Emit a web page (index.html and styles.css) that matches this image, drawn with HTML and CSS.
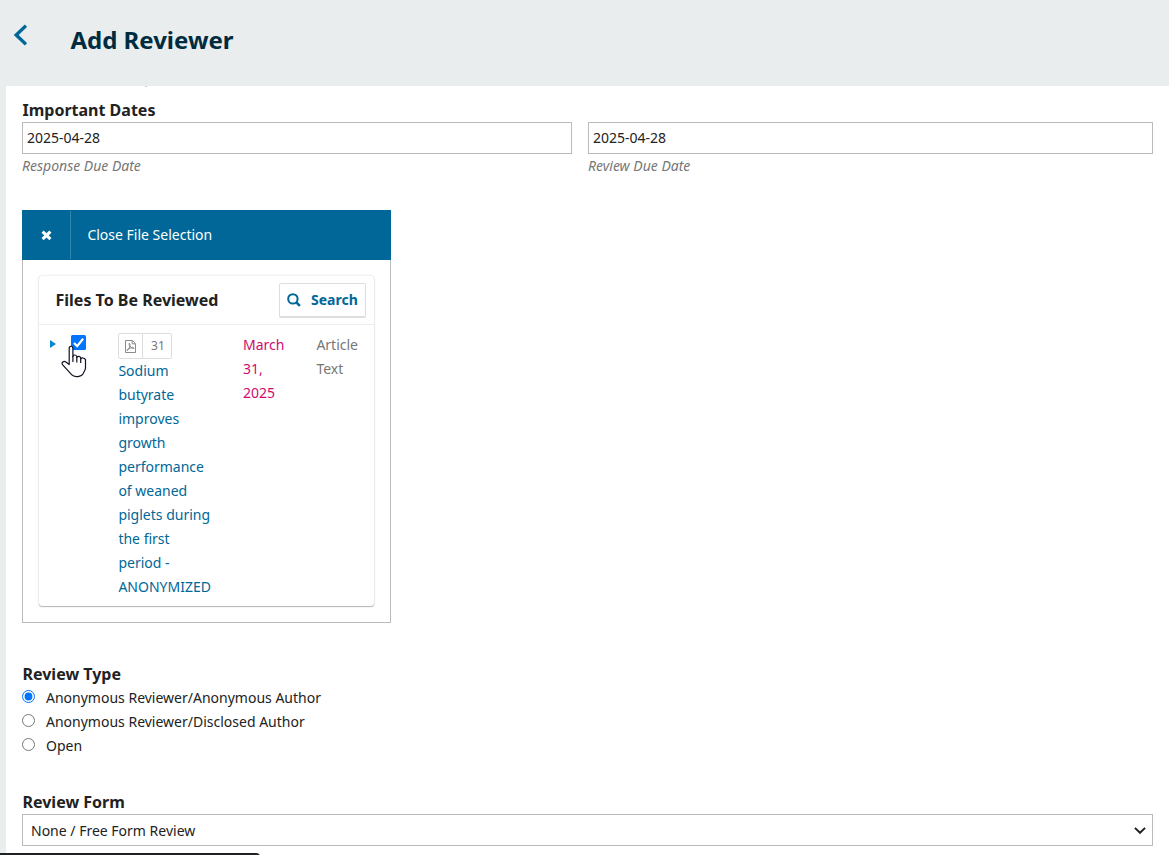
FILE: index.html
```html
<!DOCTYPE html>
<html lang="en">
<head>
<meta charset="utf-8">
<title>Add Reviewer</title>
<link rel="stylesheet" href="styles.css">
</head>
<body>
<header class="header">
  <svg class="back" width="14" height="22" viewBox="0 0 14 22"><path d="M13 1.7 3.2 11l9.8 9.3" fill="none" stroke="#006798" stroke-width="3.4"/></svg>
  <h1 class="title">Add Reviewer</h1>
</header>
<main class="panel">
  <span class="fragment"></span>
  <section>
    <h2 class="label">Important Dates</h2>
    <div class="dates">
      <div><div class="field">2025-04-28</div><div class="hint">Response Due Date</div></div>
      <div><div class="field">2025-04-28</div><div class="hint">Review Due Date</div></div>
    </div>
  </section>
  <section class="files">
    <div class="files-head">
      <span class="close"><svg width="11" height="11" viewBox="0 0 11 11"><path d="M1.6 1.7l7.8 7.4M9.4 1.7 1.6 9.1" stroke="#fff" stroke-width="3.1"/></svg></span>
      <span class="close-text">Close File Selection</span>
    </div>
    <div class="files-body">
      <div class="grid">
        <div class="grid-head">
          <h3 class="label">Files To Be Reviewed</h3>
          <div class="search"><svg width="14" height="14" viewBox="0 0 14 14"><circle cx="5.9" cy="5.9" r="4.7" fill="none" stroke="#006798" stroke-width="2"/><path d="M9.1 9.1l3.8 3.8" stroke="#006798" stroke-width="2.5"/></svg><span>Search</span></div>
        </div>
        <div class="row">
          <svg class="expand" width="6" height="8" viewBox="0 0 6 8"><path d="M0 0l6 4-6 4z" fill="#008acb"/></svg>
          <svg class="check" width="15" height="15" viewBox="0 0 15 15"><rect width="15" height="15" rx="1.5" fill="#0075ff"/><path d="M3 8l3.2 3.1L12.1 3.7" fill="none" stroke="#fff" stroke-width="2.2"/></svg>
          <div class="name">
            <span class="badge"><span class="badge-icon"><svg width="11" height="13" viewBox="0 0 11 13"><path d="M.5.5H7.4L10.5 3.6V12.5H.5zM7.2.7V3.8H10.3M4.5 3.5c1 .3.4 3.2-.4 4.8S2.2 11 1.9 10.3 4.5 8.2 6.3 7.8s3 0 2.7.6S6.1 8 4.7 5.6s-.5-2.2-.2-2.1" fill="none" stroke="#777" stroke-width=".85"/></svg></span><span class="badge-num">31</span></span>
            Sodium<br>butyrate<br>improves<br>growth<br>performance<br>of weaned<br>piglets during<br>the first<br>period -<br>ANONYMIZED
          </div>
          <div class="date">March<br>31,<br>2025</div>
          <div class="type">Article<br>Text</div>
        </div>
      </div>
    </div>
  </section>
  <section class="review-type">
    <h2 class="label">Review Type</h2>
    <label class="option"><input type="radio" name="type" checked>Anonymous Reviewer/Anonymous Author</label>
    <label class="option"><input type="radio" name="type">Anonymous Reviewer/Disclosed Author</label>
    <label class="option"><input type="radio" name="type">Open</label>
  </section>
  <section class="review-form">
    <h2 class="label">Review Form</h2>
    <div class="field select"><span>None / Free Form Review</span><svg width="12" height="7" viewBox="0 0 12 7"><path d="M.9.9 6 5.8 11.1.9" fill="none" stroke="#222" stroke-width="2"/></svg></div>
  </section>
</main>
<svg class="cursor" width="26" height="33" viewBox="0 0 26 33"><path d="M8.2 19.5V3.2c0-2.6 3.7-2.6 3.7 0v8.2c.3-1.9 3.7-1.9 3.9.4v.7c.5-1.7 3.7-1.4 3.9.6v.8c.7-1.5 3.8-1.2 4.8.7v8.3c0 2.1-1.5 3.8-2.3 5.7-1.5 3.3-9 4.2-11.6 1.1L1.5 19.6c-1.3-2.1 1.2-4 3.4-2.6z" fill="#fff" stroke="#111122" stroke-width="1.2" stroke-linejoin="round"/><path d="M11.9 11v6M15.8 12v5.4M19.7 13.5v4.4" stroke="#111122" stroke-width="1.2"/></svg>
<div class="status"></div>
</body>
</html>
```
FILE: styles.css
```css
* { box-sizing: border-box; }
body {
  margin: 0;
  height: 855px;
  overflow: hidden;
  background: #e9edee;
  color: #222;
  font: 14px/24px "Noto Sans", "Open Sans", sans-serif;
}
h1, h2, h3 { margin: 0; }
svg { display: block; flex: none; }
.header { display: flex; height: 86px; padding: 24px 0 0 13px; }
.title { margin-left: 43.4px; font-size: 24px; line-height: 32px; color: #002c40; }
.panel { margin-left: 6px; height: 769px; padding: 12px 16px 0; background: #fff; position: relative; }
.fragment { position: absolute; left: 139px; top: 0; width: 2px; height: 1px; background: #ccc; }
.label { padding-left: .5px; font-size: 16px; line-height: 24px; font-weight: 700; }
.dates { display: grid; grid-template-columns: 550px 565px; gap: 16px; }
.field { height: 32px; border: 1px solid #bbb; padding: 0 4px; line-height: 30px; background: #fff; }
.hint { font-style: italic; color: #777; }
.files { width: 369px; margin-top: 32px; }
.files-head { display: flex; height: 50px; background: #006798; color: #fff; line-height: 50px; }
.close { display: flex; align-items: center; justify-content: center; width: 49px; margin: 1px 0; padding-left: 1px; border-right: 1px solid #3285ad; }
.close-text { padding-left: 16.4px; }
.files-body { height: 363px; border: 1px solid #bbb; border-top: 0; padding: 16px 16px 15px; }
.grid { height: 330px; border-radius: 3px; box-shadow: 0 0 2px rgba(0,0,0,.22), 0 1px 1px rgba(0,0,0,.25); }
.grid-head { display: flex; align-items: center; justify-content: space-between; height: 49px; padding: 0 8px 0 16px; border-bottom: 1px solid #eee; }
.search { display: flex; align-items: center; gap: 10px; width: 87px; height: 35px; padding-left: 7px; border: 1px solid #ddd; border-bottom-width: 2px; border-radius: 2px; color: #006798; font-weight: 700; }
.row { display: flex; padding-top: 8px; }
.expand { margin: 7px 0 0 11px; }
.check { margin: 2px 0 0 15px; }
.name { width: 125px; margin-left: 32px; padding-left: .4px; color: #006798; }
.badge { display: flex; width: 54px; height: 26px; border: 1px solid #ddd; border-radius: 2px; color: #777; font-size: 12px; }
.badge-icon { display: flex; align-items: center; justify-content: center; width: 24px; border-right: 1px solid #ddd; }
.badge-num { flex: 1; padding-left: 1px; text-align: center; }
.date { width: 73.4px; color: #d00a6c; }
.type { color: #777; }
.review-type { margin-top: 39px; }
.option { display: flex; height: 24px; }
.option input { width: 13px; height: 13px; margin: 4px 11px 0 0; accent-color: #0075ff; }
.review-form { margin-top: 32px; }
.select { display: flex; align-items: center; justify-content: space-between; padding: 1px 6px 0 8px; }
.cursor { position: absolute; left: 61px; top: 345px; }
.status { position: absolute; left: 0; top: 853px; width: 260px; height: 12px; border-radius: 0 4px 0 0; background: #202124; }
```
